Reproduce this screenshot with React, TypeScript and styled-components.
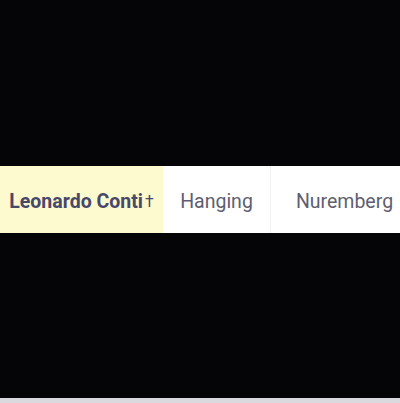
import { createGlobalStyle } from 'styled-components';
import styled from 'styled-components';

const GlobalStyle = createGlobalStyle`
  html, body {
    margin: 0;
    padding: 0;
    background: #050508;
    overflow: hidden;
  }
`;

const Screen = styled.div`
  width: 400px;
  height: 403px;
  background: #050508;
  display: flex;
  flex-direction: column;
  overflow: hidden;
`;

const Spacer = styled.div<{ $h: number }>`
  height: ${(p) => p.$h}px;
  flex-shrink: 0;
`;

const Row = styled.div`
  display: flex;
  height: 67px;
  flex-shrink: 0;
  background: #ffffff;
  width: 440px;
`;

const Cell = styled.div<{ $w: number; $hl?: boolean; $divider?: boolean }>`
  width: ${(p) => p.$w}px;
  flex-shrink: 0;
  display: flex;
  align-items: center;
  justify-content: center;
  background: ${(p) => (p.$hl ? '#fdfad0' : '#ffffff')};
  border-left: ${(p) => (p.$divider ? '1px solid #f0f0f2' : 'none')};
  box-sizing: border-box;
  font-family: Roboto, 'Liberation Sans', sans-serif;
  font-size: 19.5px;
  font-weight: ${(p) => (p.$hl ? 700 : 400)};
  color: ${(p) => (p.$hl ? '#48486a' : '#5e5e70')};
  white-space: nowrap;
  padding-top: 4px;
`;

const Dagger = styled.span`
  font-weight: 400;
  font-size: 16px;
  margin-left: 2px;
`;

const BottomStrip = styled.div`
  margin-top: auto;
  height: 5px;
  background: #d9d9de;
`;

export default function App() {
  return (
    <Screen>
      <GlobalStyle />
      <Spacer $h={166} />
      <Row>
        <Cell $w={163} $hl>
          Leonardo Conti<Dagger>†</Dagger>
        </Cell>
        <Cell $w={107}>Hanging</Cell>
        <Cell $w={148} $divider>Nuremberg</Cell>
      </Row>
      <BottomStrip />
    </Screen>
  );
}
